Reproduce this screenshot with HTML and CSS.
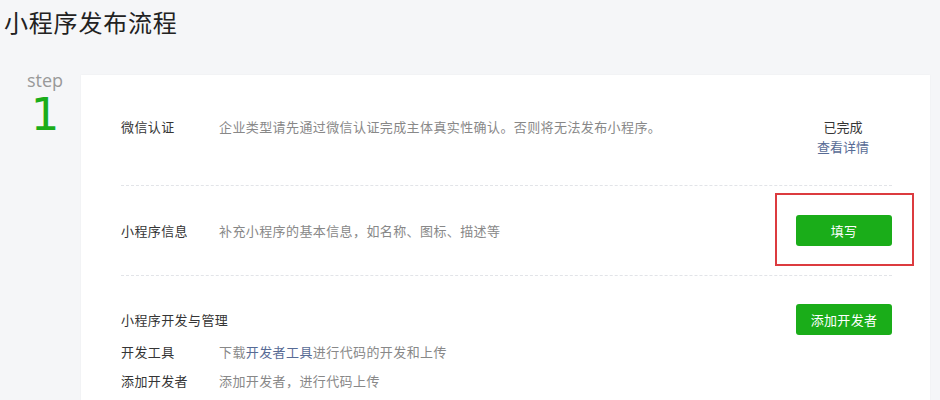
FILE: index.html
```html
<!DOCTYPE html>
<html lang="zh-CN">
<head>
<meta charset="utf-8">
<link rel="stylesheet" href="styles.css">
</head>
<body>
<h1 class="title">小程序发布流程</h1>
<div class="step-wrap">
  <div class="step-side">
    <div class="step-word">step</div>
    <div class="step-num">1</div>
  </div>
  <div class="card">
    <div class="row row-first">
      <div class="label">微信认证</div>
      <div class="desc">企业类型请先通过微信认证完成主体真实性确认。否则将无法发布小程序。</div>
      <div class="action status">
        <div class="done">已完成</div>
        <a class="link" href="#">查看详情</a>
      </div>
    </div>
    <div class="row row-btn">
      <div class="label">小程序信息</div>
      <div class="desc">补充小程序的基本信息，如名称、图标、描述等</div>
      <div class="action">
        <div class="highlight-host">
          <button class="btn">填写</button>
          <span class="highlight"></span>
        </div>
      </div>
    </div>
    <div class="row-group">
      <div class="group-head">
        <div class="group-title">小程序开发与管理</div>
        <div class="action"><button class="btn">添加开发者</button></div>
      </div>
      <div class="sub">
        <div class="label">开发工具</div>
        <div class="desc">下载<a class="link" href="#">开发者工具</a>进行代码的开发和上传</div>
      </div>
      <div class="sub">
        <div class="label">添加开发者</div>
        <div class="desc">添加开发者，进行代码上传</div>
      </div>
    </div>
  </div>
</div>
</body>
</html>
```
FILE: styles.css
```css
* { box-sizing: border-box; }
html, body {
  margin: 0;
  padding: 0;
  background: #f5f6f8;
  font-family: "Noto Sans CJK SC", "Noto Sans", sans-serif;
  color: #353535;
  overflow: hidden;
}
.title {
  margin: 0;
  padding: 5px 0 0 4px;
  height: 59px;
  font-size: 24px;
  line-height: 34px;
  font-weight: normal;
  color: #222;
  letter-spacing: 0.8px;
}
.step-wrap {
  display: flex;
  align-items: flex-start;
  margin-top: 16px;
}
.step-side {
  width: 81px;
  padding-left: 9px;
  text-align: center;
  margin-top: -6px;
}
.step-word {
  font-family: "Open Sans", "Noto Sans", sans-serif;
  font-size: 18px;
  line-height: 22px;
  color: #999;
}
.step-num {
  font-family: "DejaVu Sans", sans-serif;
  font-size: 45px;
  line-height: 44px;
  margin-top: 2px;
  color: #1aad19;
}
.card {
  flex: 1;
  margin-right: 10px;
  background: #fff;
  padding: 0 38px 0 40px;
  height: 340px;
  box-shadow: 0 0 2px rgba(0,0,0,0.04);
}
.row {
  display: flex;
  align-items: flex-start;
  font-size: 13px;
  line-height: 20px;
}
.row-first {
  padding: 42px 0 28px;
}
.row-btn {
  align-items: center;
  border-top: 1px dashed #e2e4e8;
  padding: 29px 0;
}
.label {
  width: 98px;
  flex: none;
  font-size: 13px;
  letter-spacing: 0.4px;
  color: #353535;
}
.desc {
  flex: 1;
  font-size: 13px;
  letter-spacing: 0.4px;
  color: #888;
}
.action {
  width: 96px;
  flex: none;
  text-align: center;
}
.status { padding-right: 2px; }
.done { color: #353535; }
.link {
  color: #576b95;
  text-decoration: none;
}
.highlight-host {
  position: relative;
  height: 31px;
}
.btn {
  display: block;
  width: 96px;
  height: 31px;
  border: 0;
  border-radius: 3px;
  background: #1aad19;
  color: #fff;
  font-family: "Noto Sans CJK SC", sans-serif;
  font-size: 13px;
  letter-spacing: 0.3px;
  padding: 0;
}
.highlight {
  position: absolute;
  top: -22px;
  left: -21px;
  right: -22px;
  bottom: -20px;
  border: 2px solid #dc3b3f;
}
.row-group {
  border-top: 1px dashed #e2e4e8;
  padding-top: 28px;
}
.group-head {
  display: flex;
  align-items: center;
  height: 31px;
  font-size: 13px;
}
.group-title { flex: 1; letter-spacing: 0.4px; }
.sub {
  display: flex;
  font-size: 13px;
  line-height: 29px;
}
.group-head + .sub { margin-top: 2px; }
```
